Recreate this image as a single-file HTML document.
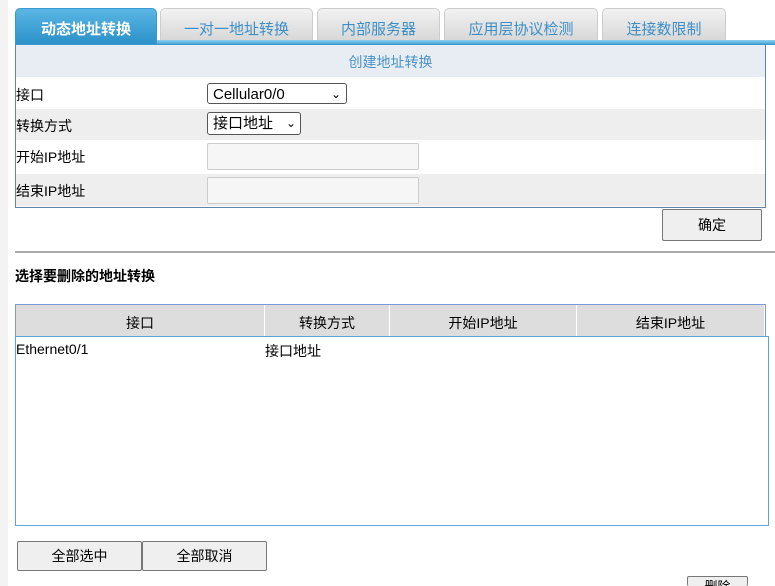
<html style="height:586px;overflow:hidden"><head><style>
body{margin:0;width:775px;height:586px;background:#fff;font-family:"Liberation Sans","Noto Sans CJK SC",sans-serif;font-size:14px;color:#000;position:relative;overflow:hidden}
.a{position:absolute}
.strip{left:0;top:0;width:8px;height:586px;background:#f3f3f3}
.tab{top:8px;height:34px;border:1px solid #ccc;border-bottom:none;border-radius:5px 5px 0 0;background:linear-gradient(#f2f2f2,#d6d6d6);color:#3d8fc6;font-size:15px;text-align:center;line-height:42px;box-sizing:border-box}
.act{background:linear-gradient(#5ab6e4,#2a90c8);color:#fff;font-weight:bold;border-color:#3a9ad0;height:37px}
.bar{left:157px;top:40px;width:618px;height:5px;background:linear-gradient(#8fd0ef,#3a9ad0)}
.row{left:16px;width:749px;line-height:34px}
.g{background:#eeeeee}
.inp{border:1px solid #ccc;border-radius:2px;background:#f6f6f6;width:210px;height:25px}
.sel{border:1px solid #555;border-radius:3px;background:#fff;height:21px;font-size:15px;line-height:21px;padding-left:5px;box-sizing:border-box}
.btn{border:1px solid #777;border-radius:2px;background:#efefef;text-align:center;box-sizing:border-box}
.th{top:305px;height:31px;line-height:37px;text-align:center;background:#dddddd;border-right:1px solid #fff;box-sizing:border-box}
</style></head><body>
<div class="a strip"></div>
<div class="a tab act" style="left:15px;width:142px">动态地址转换</div>
<div class="a tab" style="left:160px;width:153px">一对一地址转换</div>
<div class="a tab" style="left:317px;width:123px">内部服务器</div>
<div class="a tab" style="left:444px;width:154px">应用层协议检测</div>
<div class="a tab" style="left:602px;width:124px">连接数限制</div>
<div class="a bar"></div>
<div class="a" style="left:15px;top:44px;width:749px;height:162px;border:1px solid #5f86a8;border-top:1px solid #3a9ad0"></div>
<div class="a" style="left:16px;top:45px;width:749px;height:32px;background:#e8ecf3;color:#4a93c4;text-align:center;line-height:35px">创建地址转换</div>
<div class="a row" style="top:78px">接口</div>
<div class="a row g" style="top:109px;height:31px">转换方式</div>
<div class="a row" style="top:140px">开始IP地址</div>
<div class="a row g" style="top:174px;height:32px">结束IP地址</div>
<div class="a sel" style="left:207px;top:83px;width:140px">Cellular0/0<span style="position:absolute;right:5px;font-size:12px">&#8964;</span></div>
<div class="a sel" style="left:207px;top:112px;width:94px;height:23px">接口地址<span style="position:absolute;right:4px;font-size:12px">&#8964;</span></div>
<div class="a inp" style="left:207px;top:143px"></div>
<div class="a inp" style="left:207px;top:177px"></div>
<div class="a btn" style="left:662px;top:209px;width:100px;height:32px;line-height:31px">确定</div>
<div class="a" style="left:15px;top:251px;width:760px;height:2px;background:#aaa"></div>
<div class="a" style="left:15px;top:266px;font-weight:bold">选择要删除的地址转换</div>
<div class="a" style="left:15px;top:304px;width:751px;height:32px;border:1px solid #7d9bd8;border-bottom:2px solid #7d9bd8;box-sizing:border-box;background:#ddd"></div>
<div class="a th" style="left:16px;width:249px">接口</div>
<div class="a th" style="left:265px;width:125px">转换方式</div>
<div class="a th" style="left:390px;width:187px">开始IP地址</div>
<div class="a th" style="left:577px;width:188px">结束IP地址</div>
<div class="a" style="left:15px;top:336px;width:754px;height:190px;border:1px solid #5aa5d5;box-sizing:border-box"></div>
<div class="a" style="left:16px;top:341px">Ethernet0/1</div>
<div class="a" style="left:265px;top:341px">接口地址</div>
<div class="a btn" style="left:17px;top:541px;width:125px;height:30px;line-height:29px">全部选中</div>
<div class="a btn" style="left:142px;top:541px;width:125px;height:30px;line-height:29px">全部取消</div>
<div class="a btn" style="left:687px;top:576px;width:61px;height:10px;overflow:hidden;border-bottom:none;line-height:20px;font-size:13px">删除</div>
</body></html>
